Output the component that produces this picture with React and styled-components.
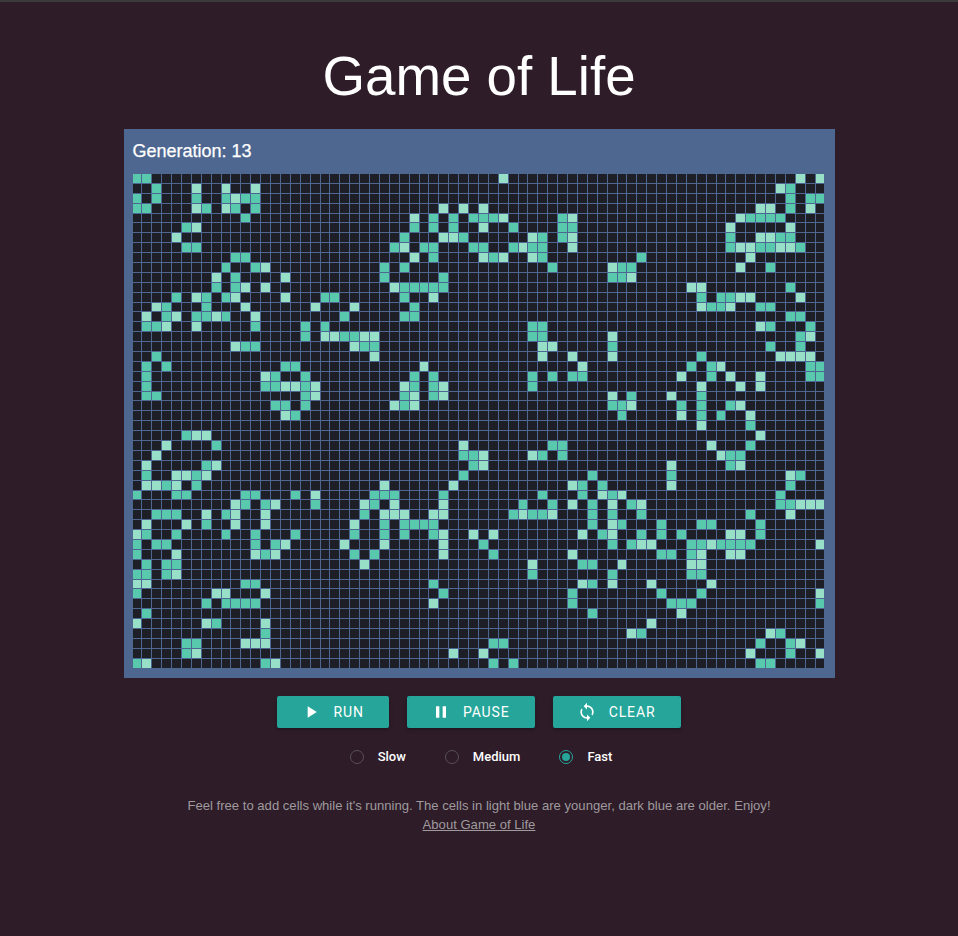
import styled, { createGlobalStyle } from "styled-components";
import { MdPlayArrow, MdPause, MdSync } from "react-icons/md";

const COLS = 70;

// per row: [older cells, younger cells], column numbers
const BOARD = [
    ["0 1", "37 67 69"],
    ["2 66", "6 9 12 65"],
    ["0 2 6 9 11 12 66 68 69", "10"],
    ["0 1 7 10 12 66", "6 9 31 33 35 63 64 68"],
    ["11 30 32 34 35 36 43 62 63 64 65", "28 37 44 61"],
    ["5 28 30 32 38 43 44", "6 35 60 66"],
    ["27 33 41 43 60 65 66", "4 31 32 40 44 63 64"],
    ["5 6 26 29 30 34 35 38 40 41 60 63 64 67", "27 39 44 61 62 65 66"],
    ["10 11 30 36 41 51", "28 35 37 40 62"],
    ["9 12 25 27 42 49 50 64", "13 48 61"],
    ["10 25 31 48 49", "8 15 50"],
    ["8 10 27 28 29 30 31 66", "11 13 26 56 57"],
    ["4 7 9 19 20 27 57 59 60", "6 10 15 30 61 62 67"],
    ["3 7 28 58 59 63 64", "2 11 18 22 57 60"],
    ["3 6 7 9 21 27 28 66 67", "1 4 8 12"],
    ["1 2 12 17 19 40 41 64 68", "3 6 63"],
    ["17 21 22 40 41 67", "19 20 23 24 48 68"],
    ["11 12 23 24 48 64 67", "10 22 41 42"],
    ["2 57", "24 41 44 48 65 66 67 68"],
    ["1 3 15 16 56 58 68 69", "29 45 59"],
    ["1 14 17 28 30 40 42 44 45 58 68 69", "13 55 60 63"],
    ["1 13 14 17 28 30 40", "15 16 18 27 31 57 61 63"],
    ["1 2 17 27 30 50 57", "18 28 31 48 54"],
    ["14 15 17 27 48 49 55 57 60", "26 28 50 61"],
    ["16 49 57 59", "15 55 62"],
    ["62", "57"],
    ["5", "6 7 63"],
    ["8 42 43 62", "3 33 58"],
    ["33 34 41 43 60 61", "2 35 40 59"],
    ["7 34 60", "1 8 35 54 61"],
    ["1 6 33 46 54 67", "4 5 7 66"],
    ["3 6 45 47 66", "1 2 4 25 32 44 54"],
    ["0 4 5 11 12 16 24 25 26 31 41 45 48 65", "18 47 49"],
    ["11 13 18 24 39 42 46 50 65 66", "10 14 23 26 31 44 48 51 67 68 69"],
    ["2 3 4 9 23 38 40 41 46 48 51 62", "7 10 13 25 26 27 30 31 39 42 66"],
    ["7 25 27 28 29 30 46 49 53 57 58 63", "1 5 10 13 22 48"],
    ["1 4 9 12 16 22 25 27 30 47 51 53 55 63", "0 31 34 36 45 48 60 61"],
    ["0 2 3 12 14 35 48 50 56 57 59 60 61 62", "15 21 25 31 51 52 58 69"],
    ["0 13 22 24 36 53 54 56", "4 12 14 31 44 57 60 61"],
    ["1 3 4 45 46", "23 40 49 56 57"],
    ["0 1 3 40 48 56 57", "4"],
    ["11 12 30 46", "0 1 45 48 52 58"],
    ["0 31 44 53 57", "8 9 13 69"],
    ["7 9 10 11 12 44 54 55 56 69", "30"],
    ["1 46", "55"],
    ["8", "0 7 13 52"],
    ["13 51 65", "50 64"],
    ["5 6 36 37 63 66", "11 12 13 67"],
    ["5 66", "6 32 35 62 69"],
    ["0 13 36 38 63 64", "1 14"],
];

const cellColors = {
    dead: "#1e1f26",
    old: "#59c9ae",
    young: "#98dfc8",
};

const GlobalStyle = createGlobalStyle`
    html, body {
        margin: 0;
        padding: 0;
        background: #2e1c28;
    }

    body {
        border-top: 2px solid #3b3b3b;
        font-family: "Liberation Sans", Arial, sans-serif;
    }
`;

const Page = styled.div`
    display: flex;
    flex-direction: column;
    align-items: center;
    min-height: 934px;
`;

const Title = styled.h1`
    margin: 40px 0 19px;
    font-size: 54.7px;
    font-weight: 400;
    line-height: 68px;
    color: #fff;
`;

const Panel = styled.div`
    width: 692px;
    padding: 0 10px 10px 9px;
    background: #4e6790;
`;

const Generation = styled.div`
    height: 45px;
    font-size: 18px;
    line-height: 44px;
    color: #fff;
    -webkit-text-stroke: 0.25px #fff;
`;

const Grid = styled.div`
    display: grid;
    grid-template-columns: repeat(${COLS}, 1fr);
    grid-auto-rows: 8.9px;
    gap: 1px;
`;

const Cell = styled.div`
    background: ${(props) => cellColors[props.$state]};
`;

const Buttons = styled.div`
    display: flex;
    gap: 18px;
    margin-top: 18px;
`;

const Button = styled.button`
    display: flex;
    align-items: center;
    height: 32px;
    padding: 0 25px 0 24px;
    border: none;
    border-radius: 2px;
    background: #26a69a;
    box-shadow: 0 2px 2px rgba(0 0 0 / 14%), 0 1px 5px rgba(0 0 0 / 12%);
    font-family: Roboto, sans-serif;
    font-size: 14px;
    font-weight: 400;
    letter-spacing: 0.9px;
    color: #fff;
    text-transform: uppercase;

    svg {
        margin-right: 12px;
        font-size: 20px;
    }
`;

const Speeds = styled.div`
    display: flex;
    gap: 39px;
    margin-top: 21px;
    padding-left: 4px;
`;

const Speed = styled.label`
    display: flex;
    align-items: center;
    gap: 14px;
    height: 16px;
    font-family: Roboto, sans-serif;
    font-size: 13px;
    font-weight: 500;
    color: #fff;
`;

const Radio = styled.input.attrs({ type: "radio", name: "speed" })`
    appearance: none;
    display: grid;
    place-items: center;
    width: 14px;
    height: 14px;
    margin: 0;
    border: 1px solid #5a5058;
    border-radius: 50%;

    &:checked {
        border-color: #26a69a;
    }

    &:checked::after {
        content: "";
        width: 8px;
        height: 8px;
        border-radius: 50%;
        background: #26a69a;
    }
`;

const Footer = styled.p`
    margin: 31px 0 0;
    font-size: 13.1px;
    line-height: 19px;
    text-align: center;
    color: #9e9a9d;
`;

const About = styled.a`
    color: inherit;
    text-decoration: underline;
`;

const App = () => {
    const rows = BOARD.map(([old, young]) => ({
        old: old.split(" ").map(Number),
        young: young.split(" ").map(Number),
    }));

    return (
        <Page>
            <GlobalStyle />
            <Title>Game of Life</Title>
            <Panel>
                <Generation>Generation: 13</Generation>
                <Grid>
                    {rows.map((row, r) =>
                        Array.from({ length: COLS }, (_, c) => {
                            const state = row.old.includes(c) ? "old" : row.young.includes(c) ? "young" : "dead";
                            return <Cell key={`${r}-${c}`} $state={state} />;
                        })
                    )}
                </Grid>
            </Panel>
            <Buttons>
                <Button>
                    <MdPlayArrow />
                    Run
                </Button>
                <Button>
                    <MdPause />
                    Pause
                </Button>
                <Button>
                    <MdSync />
                    Clear
                </Button>
            </Buttons>
            <Speeds>
                <Speed>
                    <Radio />
                    Slow
                </Speed>
                <Speed>
                    <Radio />
                    Medium
                </Speed>
                <Speed>
                    <Radio defaultChecked />
                    Fast
                </Speed>
            </Speeds>
            <Footer>
                Feel free to add cells while it's running. The cells in light blue are younger, dark blue are older. Enjoy!
                <br />
                <About href="#about">About Game of Life</About>
            </Footer>
        </Page>
    );
};

export default App;
